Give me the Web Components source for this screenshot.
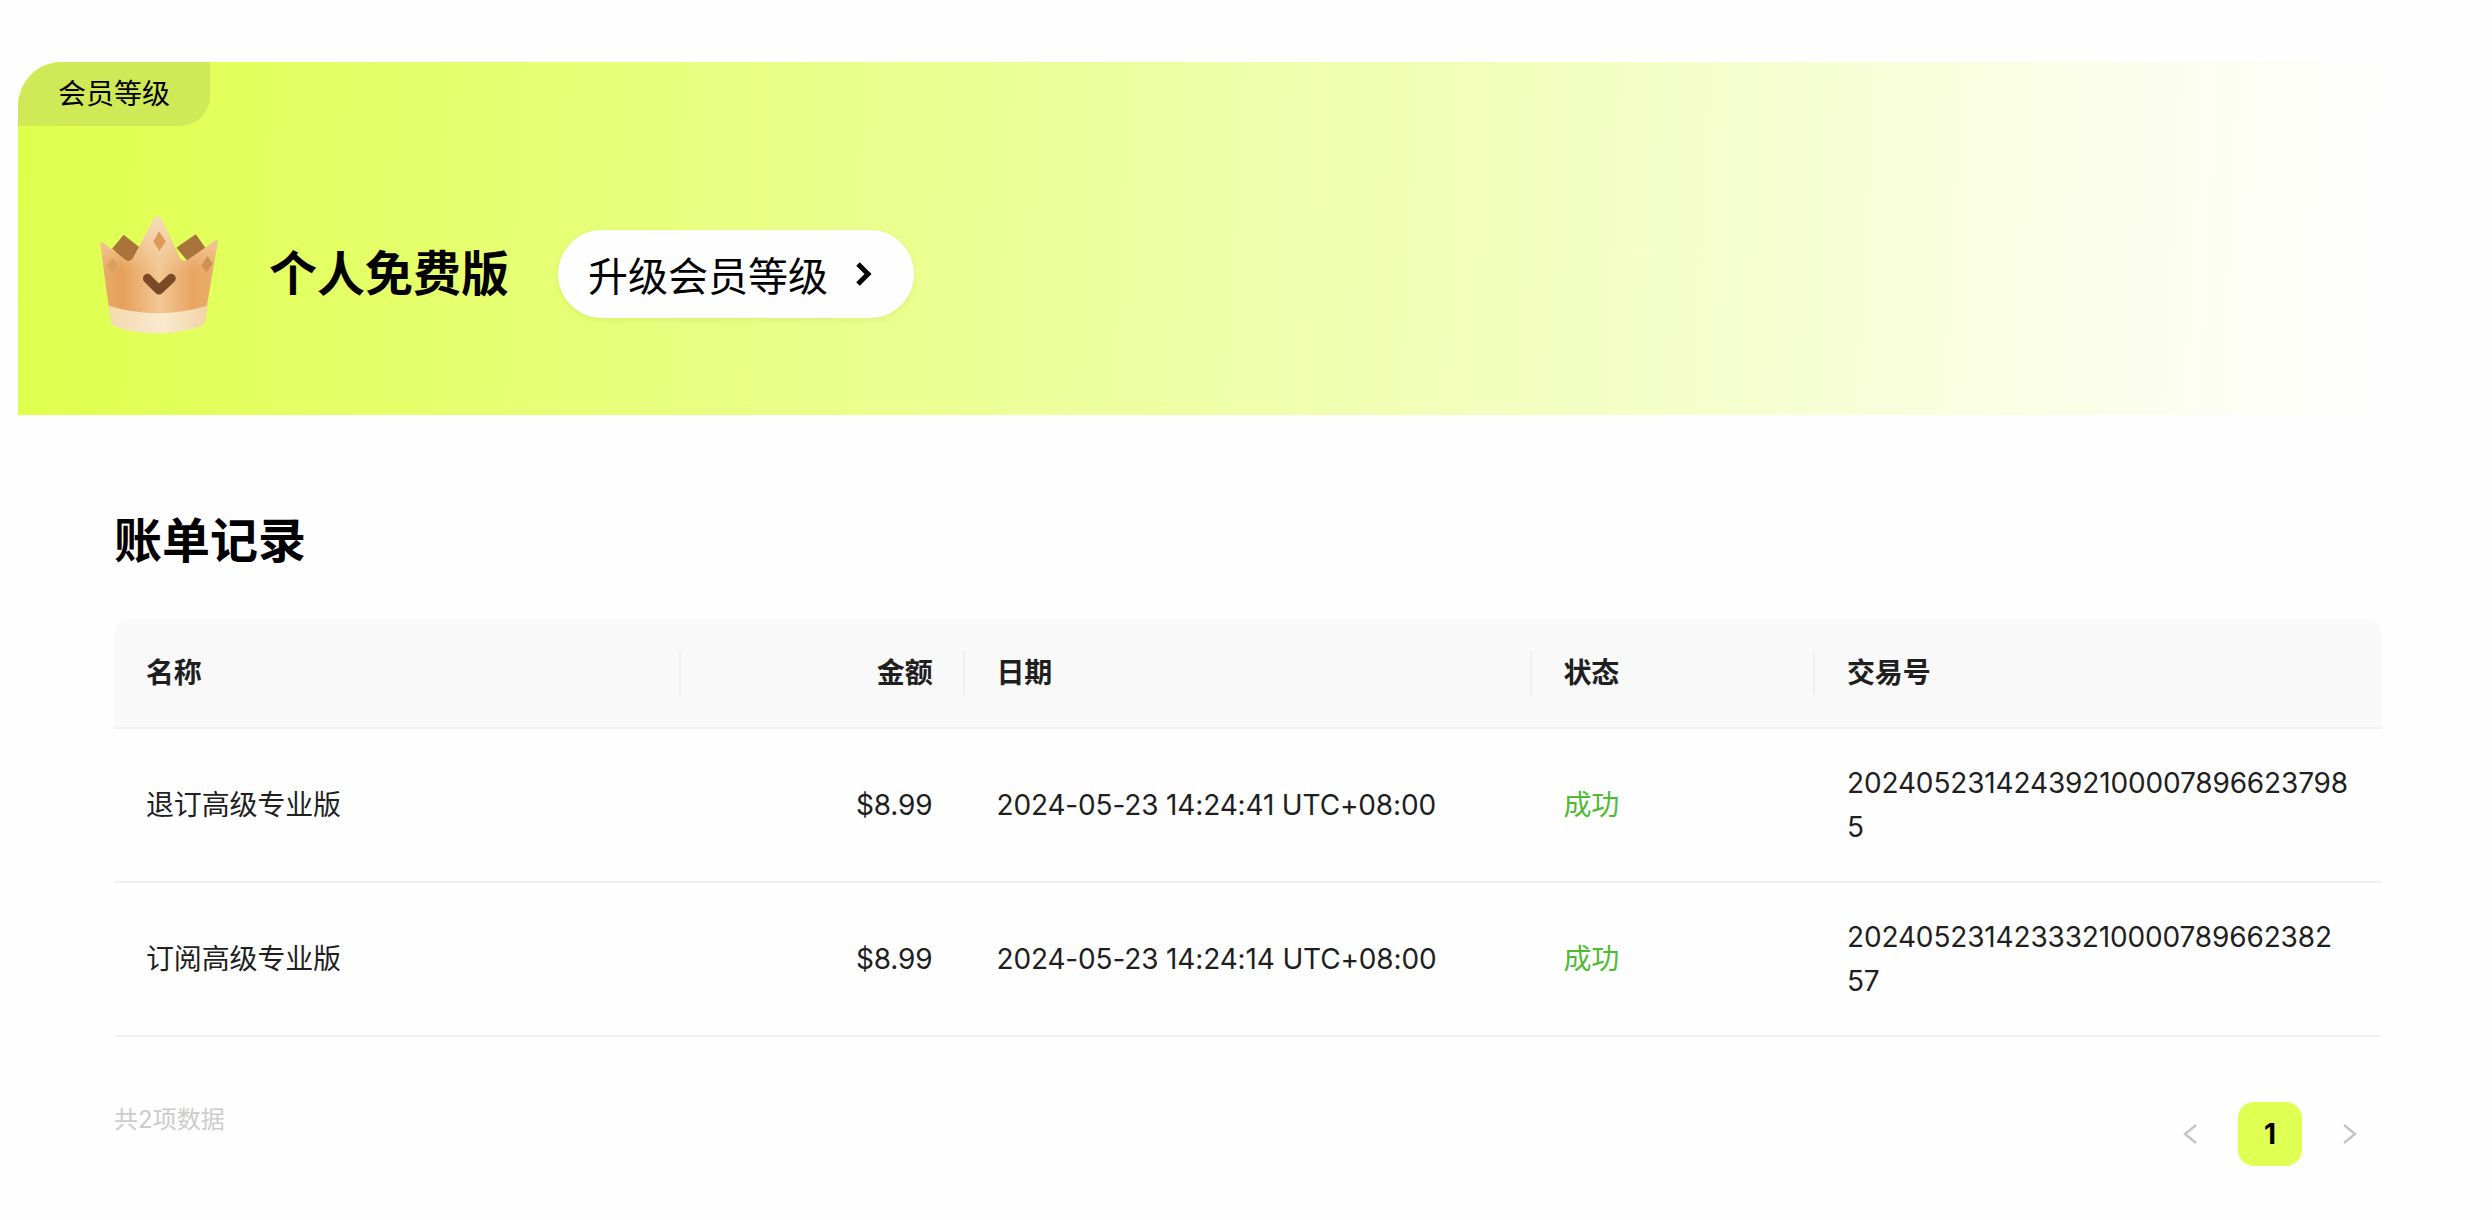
<!DOCTYPE html>
<html lang="zh">
<head>
<meta charset="utf-8">
<title>会员等级</title>
<style>
    html, body { margin: 0; background: #fefefe; }
    body { font-family: Inter, "Noto Sans CJK SC", sans-serif; color: #1f1f1f; }
</style>
</head>
<body>
<billing-page>
    <member-banner plan="个人免费版" action="升级会员等级">会员等级</member-banner>
    <bill-table title="账单记录">
        <bill-row head name="名称" amount="金额" date="日期" status="状态" trade="交易号"></bill-row>
        <bill-row name="退订高级专业版" amount="$8.99" date="2024-05-23 14:24:41 UTC+08:00" status="成功" trade="202405231424392100007896623798|5"></bill-row>
        <bill-row name="订阅高级专业版" amount="$8.99" date="2024-05-23 14:24:14 UTC+08:00" status="成功" trade="20240523142333210000789662382|57"></bill-row>
    </bill-table>
    <bill-pager total="2" current="1"></bill-pager>
</billing-page>

<script>
class BillingPage extends HTMLElement {
    constructor() {
        super();
        this.attachShadow({ mode: 'open' });
    }

    connectedCallback() {
        this.shadowRoot.innerHTML = `
            <style>
                :host { display: block; padding-top: 62px; }
            </style>
            <slot></slot>
        `;
    }
}

class CrownIcon extends HTMLElement {
    constructor() {
        super();
        this.attachShadow({ mode: 'open' });
    }

    connectedCallback() {
        const outline = 'M47 122 Q46 116 54 118 L122 170 Q134 178 143 164 L206 48 Q216 34 226 48 L282 164 Q290 178 304 170 L386 112 Q394 108 393 117 L362 300 Q362 316 340 322 Q215 344 92 322 Q72 316 70 298 Z';
        this.shadowRoot.innerHTML = `
            <style>
                :host { display: block; width: 120px; height: 120px; flex: none; }
                svg { display: block; width: 100%; height: 100%; }
            </style>
            <svg viewBox="40 34 354 354" xmlns="http://www.w3.org/2000/svg">
                <defs>
                    <linearGradient id="body" x1="0" x2="1" y1="0" y2="0">
                        <stop offset="0" stop-color="#e9ad6c"/>
                        <stop offset="0.18" stop-color="#e59f58"/>
                        <stop offset="0.5" stop-color="#f3c795"/>
                        <stop offset="0.78" stop-color="#e8a662"/>
                        <stop offset="1" stop-color="#eaad6e"/>
                    </linearGradient>
                    <linearGradient id="peak" x1="0" x2="0" y1="0" y2="1">
                        <stop offset="0" stop-color="#f6dcb8"/>
                        <stop offset="0.55" stop-color="#f6dcb8" stop-opacity="0"/>
                    </linearGradient>
                    <linearGradient id="band" x1="0" x2="1" y1="0" y2="0">
                        <stop offset="0" stop-color="#f3d9ae"/>
                        <stop offset="0.55" stop-color="#faeacf"/>
                        <stop offset="1" stop-color="#f1d4a6"/>
                    </linearGradient>
                </defs>
                <path d="M84 136 L116 98 L164 136 L134 182 Z" fill="#a9743c" stroke="#a9743c" stroke-width="4" stroke-linejoin="round"/>
                <path d="M274 134 L328 96 L356 136 L314 182 Z" fill="#a9743c" stroke="#a9743c" stroke-width="4" stroke-linejoin="round"/>
                <path d="${outline}" fill="url(#body)"/>
                <path d="${outline}" fill="url(#peak)"/>
                <path d="M70 304 Q215 350 364 304 L356 352 Q350 364 326 372 Q215 400 104 372 Q84 364 78 352 Z" fill="url(#band)"/>
                <path d="M220 85 L240 115 L221 143 L203 115 Z" fill="#dc9a52"/>
                <path d="M66 186 L82 164 L99 184 L84 206 Z" fill="#dc9f5e"/>
                <path d="M345 186 L363 159 L378 180 L360 206 Z" fill="#d1904c"/>
                <path d="M186 224 L220 258 L256 224" fill="none" stroke="#7a4a26" stroke-width="27" stroke-linecap="round" stroke-linejoin="round"/>
            </svg>
        `;
    }
}

class MemberBanner extends HTMLElement {
    constructor() {
        super();
        this.attachShadow({ mode: 'open' });
    }

    connectedCallback() {
        const plan = this.getAttribute('plan');
        const action = this.getAttribute('action');
        this.shadowRoot.innerHTML = `
            <style>
                :host {
                    display: flex;
                    flex-direction: column;
                    align-items: flex-start;
                    height: 353px;
                    margin-left: 18px;
                    border-radius: 44px 0 0 0;
                    background: linear-gradient(93deg, #dfff4c 0%, #fefefe 95%);
                    color: #000;
                }
                .tag {
                    box-sizing: border-box;
                    width: 192px;
                    height: 64px;
                    padding-left: 40px;
                    background: #d0e957;
                    border-radius: 44px 0 30px 0;
                    font-size: 28px;
                    line-height: 64px;
                }
                .info {
                    display: flex;
                    align-items: center;
                    padding: 88px 0 0 80px;
                }
                .plan {
                    margin-left: 51px;
                    font-size: 48px;
                    font-weight: 700;
                    line-height: 64px;
                }
                button {
                    display: flex;
                    align-items: center;
                    height: 88px;
                    margin-left: 49px;
                    padding: 0 40px 0 30px;
                    border: none;
                    border-radius: 44px;
                    background: #fefefe;
                    box-shadow: 0 2px 6px rgba(120, 140, 40, 0.12);
                    color: #000;
                    font: inherit;
                    font-size: 40px;
                }
                svg { display: block; margin-left: 26px; }
            </style>
            <div class="tag"><slot></slot></div>
            <div class="info">
                <crown-icon></crown-icon>
                <div class="plan">${plan}</div>
                <button>${action}
                    <svg width="20" height="28" viewBox="0 0 20 28"><path d="M4 4 L14 14 L4 24" fill="none" stroke="#000" stroke-width="5"/></svg>
                </button>
            </div>
        `;
    }
}

class BillTable extends HTMLElement {
    constructor() {
        super();
        this.attachShadow({ mode: 'open' });
    }

    connectedCallback() {
        this.shadowRoot.innerHTML = `
            <style>
                :host { display: block; margin: 0 110px 0 114px; padding-top: 90px; }
                h2 {
                    margin: 0 0 42px;
                    color: #000;
                    font-size: 48px;
                    font-weight: 700;
                    line-height: 72px;
                }
            </style>
            <h2>${this.getAttribute('title')}</h2>
            <slot></slot>
        `;
    }
}

class BillRow extends HTMLElement {
    constructor() {
        super();
        this.attachShadow({ mode: 'open' });
    }

    connectedCallback() {
        const head = this.hasAttribute('head');
        const get = (name) => this.getAttribute(name);
        // the "|" in trade marks where the long number wraps
        const trade = get('trade').split('|').join('<wbr>');
        this.shadowRoot.innerHTML = `
            <style>
                :host {
                    display: grid;
                    grid-template-columns: 2fr 1fr 2fr 1fr 2fr;
                    align-items: center;
                    box-sizing: border-box;
                    height: 154px;
                    border-bottom: 2px solid #f0f0f0;
                    font-size: 28px;
                    letter-spacing: -0.15px;
                    line-height: 44px;
                }
                :host([head]) {
                    height: 110px;
                    background: #f9f9f9;
                    border-radius: 16px 16px 0 0;
                    font-weight: 700;
                }
                .cell { position: relative; padding: 0 32px; min-width: 0; }
                .amount { text-align: right; }
                .ok { color: #4fbb33; }
                :host([head]) .cell:not(:last-child)::after {
                    content: "";
                    position: absolute;
                    top: 0;
                    right: 0;
                    width: 2px;
                    height: 44px;
                    background: #f0f0f0;
                }
            </style>
            <div class="cell">${get('name')}</div>
            <div class="cell amount">${get('amount')}</div>
            <div class="cell">${get('date')}</div>
            <div class="cell ${head ? '' : 'ok'}">${get('status')}</div>
            <div class="cell">${trade}</div>
        `;
    }
}

class BillPager extends HTMLElement {
    constructor() {
        super();
        this.attachShadow({ mode: 'open' });
    }

    connectedCallback() {
        this.shadowRoot.innerHTML = `
            <style>
                :host {
                    display: flex;
                    justify-content: space-between;
                    align-items: flex-start;
                    margin: 0 110px 0 114px;
                    padding-top: 65px;
                }
                .total { color: #cccccc; font-size: 24px; line-height: 36px; }
                .pages { display: flex; gap: 16px; }
                .page {
                    display: flex;
                    align-items: center;
                    justify-content: center;
                    width: 64px;
                    height: 64px;
                    border-radius: 16px;
                    font-size: 28px;
                    font-weight: 700;
                    color: #000;
                }
                .current { background: #dfff52; }
            </style>
            <div class="total">共${this.getAttribute('total')}项数据</div>
            <div class="pages">
                <div class="page"><svg width="16" height="24" viewBox="0 0 16 24"><path d="M14 3 L3 12 L14 21" fill="none" stroke="#c4c4c4" stroke-width="2.4"/></svg></div>
                <div class="page current">${this.getAttribute('current')}</div>
                <div class="page"><svg width="16" height="24" viewBox="0 0 16 24"><path d="M2 3 L13 12 L2 21" fill="none" stroke="#c4c4c4" stroke-width="2.4"/></svg></div>
            </div>
        `;
    }
}

customElements.define('billing-page', BillingPage);
customElements.define('crown-icon', CrownIcon);
customElements.define('member-banner', MemberBanner);
customElements.define('bill-table', BillTable);
customElements.define('bill-row', BillRow);
customElements.define('bill-pager', BillPager);
</script>
</body>
</html>
